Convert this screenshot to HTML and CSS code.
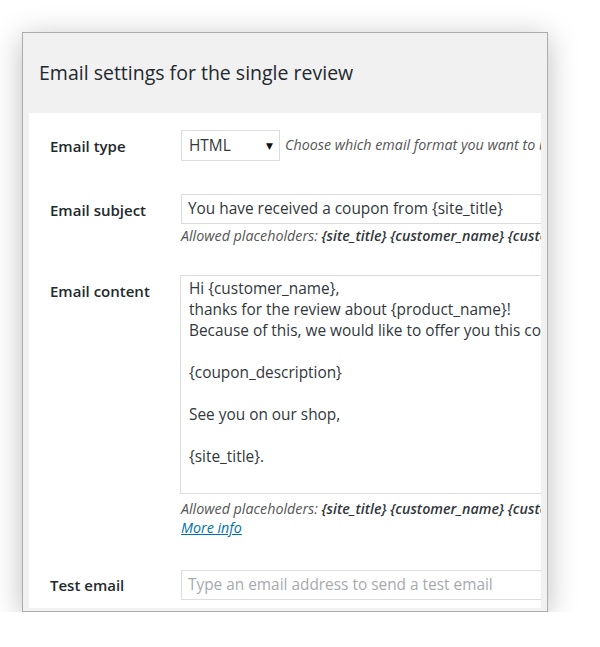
FILE: index.html
```html
<!DOCTYPE html>
<html>
<head>
<meta charset="utf-8">
<link rel="stylesheet" href="styles.css">
</head>
<body>
<div class="dialog">
  <div class="header">
    <h1 class="title">Email settings for the single review</h1>
  </div>
  <div class="content">
    <div class="row row-type">
      <div class="label">Email type</div>
      <div class="field inline">
        <div class="select"><span class="select-value">HTML</span><span class="select-arrow">▼</span></div>
        <span class="desc">Choose which email format you want to use for this email</span>
      </div>
    </div>
    <div class="row row-subject">
      <div class="label">Email subject</div>
      <div class="field">
        <div class="input">You have received a coupon from {site_title}</div>
        <div class="desc desc-sub">Allowed placeholders: <b>{site_title}</b> <b>{customer_name}</b> <b>{customer_email}</b></div>
      </div>
    </div>
    <div class="row row-content">
      <div class="label">Email content</div>
      <div class="field">
        <div class="textarea">Hi {customer_name},
thanks for the review about {product_name}!
Because of this, we would like to offer you this coupon as a little gift:

{coupon_description}

See you on our shop,

{site_title}.</div>
        <div class="desc desc-after">Allowed placeholders: <b>{site_title}</b> <b>{customer_name}</b> <b>{customer_email}</b> <b>{product_name}</b><br><a class="more" href="#">More info</a></div>
      </div>
    </div>
    <div class="row row-test">
      <div class="label label-test">Test email</div>
      <div class="field">
        <div class="input placeholder">Type an email address to send a test email</div>
      </div>
    </div>
  </div>
</div>
</body>
</html>
```
FILE: styles.css
```css
html, body {
  margin: 0;
  padding: 0;
  background: #ffffff;
}
body {
  font-family: "Open Sans", "DejaVu Sans", sans-serif;
  color: #23282d;
}
.dialog {
  margin: 32px 0 0 22px;
  width: 524px;
  height: 578px;
  border: 1px solid #acacac;
  background: #f1f1f1;
  box-shadow: 0 5px 28px rgba(0, 0, 0, 0.26);
  display: flex;
  flex-direction: column;
}
.header {
  height: 80px;
  box-sizing: border-box;
  padding: 26px 0 0 16px;
}
.title {
  margin: 0;
  font-size: 19.5px;
  line-height: 27px;
  font-weight: 400;
  color: #23282d;
}
.content {
  margin: 0 6px;
  height: 495px;
  background: #ffffff;
  overflow: hidden;
}
.row {
  display: flex;
  align-items: flex-start;
}
.row-type { padding-top: 17px; }
.row-subject { padding-top: 33px; }
.row-content { padding-top: 29.5px; }
.row-test { padding-top: 33px; }
.label {
  flex: 0 0 131px;
  padding-left: 21px;
  padding-top: 6px;
  font-size: 15px;
  line-height: 20px;
  font-weight: 600;
  color: #23282d;
  white-space: nowrap;
}
.label-test {
  padding-top: 5px;
}
.field {
  flex: 0 0 auto;
  white-space: nowrap;
}
.inline {
  display: flex;
  align-items: center;
}
.select {
  height: 29px;
  border: 1px solid #dddddd;
  display: flex;
  align-items: center;
  justify-content: space-between;
  padding: 0 6px 0 7px;
  width: 84px;
  font-size: 15.4px;
  color: #32373c;
}
.select-arrow {
  font-size: 9px;
  color: #111;
}
.desc {
  font-size: 14.3px;
  line-height: 18.5px;
  font-style: italic;
  color: #555555;
}
.inline .desc {
  margin-left: 5px;
}
.desc b {
  font-weight: 600;
  color: #32373c;
}
.desc-sub {
  margin-top: 3px;
}
.input {
  width: 400px;
  height: 28px;
  border: 1px solid #dddddd;
  padding: 0 6px;
  font-size: 15.4px;
  line-height: 28px;
  color: #32373c;
}
.placeholder {
  color: #a7aaad;
}
.textarea {
  width: 420px;
  height: 209px;
  border: 1px solid #dddddd;
  padding: 2px 8px 6px 8px;
  font-size: 15.4px;
  line-height: 21px;
  color: #32373c;
  white-space: pre;
  margin-left: -1px;
}
.desc-after {
  margin-top: 6px;
}
.more {
  color: #0073aa;
  text-decoration: underline;
}
```
